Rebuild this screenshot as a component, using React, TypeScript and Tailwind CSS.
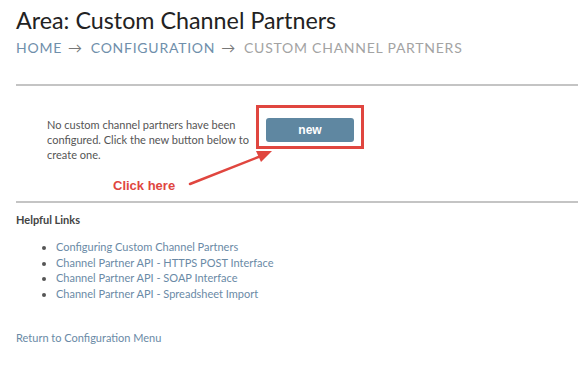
import React from 'react'

const links = [
  'Configuring Custom Channel Partners',
  'Channel Partner API - HTTPS POST Interface',
  'Channel Partner API - SOAP Interface',
  'Channel Partner API - Spreadsheet Import',
]

export default function App() {
  return (
    <div className="w-[578px] h-[377px] bg-white font-['Lato',sans-serif] text-[#444] pl-4 overflow-hidden">
      {/* Header */}
      <h1 className="text-[23.3px] leading-[26px] pt-[7px] text-[#222]">Area: Custom Channel Partners</h1>
      <div className="mt-[6px] text-[14px] leading-[18px] uppercase tracking-[0.75px] flex gap-[6px]">
        <span className="text-[#6f8fab]">Home</span>
        <span className="text-[#777]">→</span>
        <span className="text-[#6f8fab] ml-[2px]">Configuration</span>
        <span className="text-[#777]">→</span>
        <span className="text-[#a3a3a3] ml-[2px]">Custom Channel Partners</span>
      </div>

      <div className="mt-[27px] border-t-2 border-[#c4c4c4]" />

      {/* Empty state */}
      <div className="relative h-[115px]">
        <div className="flex pt-[19px]">
          <p className="ml-[31px] w-[205px] pt-[12px] text-[11px] leading-[15px] text-[#555]">
            No custom channel partners have been configured. Click the new button below to create one.
          </p>
          <div className="ml-[4px] h-[44px] border-[3px] border-[#e0463f] px-[7px] pt-[8px] pb-[6px]">
            <button className="w-[88px] h-[24px] rounded-[3px] bg-[#5f87a1] text-white text-[12px] font-bold font-['Liberation_Sans',sans-serif]">
              new
            </button>
          </div>
        </div>
        <span className="absolute left-[97px] top-[90px] text-[13px] font-bold text-[#e0463f] font-['Liberation_Sans',sans-serif]">
          Click here
        </span>
        <svg className="absolute left-[165px] top-[56px]" width="100" height="50" viewBox="0 0 100 50">
          <line x1="9" y1="42" x2="80" y2="14" stroke="#e0463f" strokeWidth="2.5" strokeLinecap="round" />
          <polygon points="91,9 75,9 80,20" fill="#e0463f" />
        </svg>
      </div>

      <div className="border-t-2 border-[#c4c4c4]" />

      {/* Helpful links */}
      <h2 className="mt-[9px] text-[11px] leading-[15px] font-bold text-[#444]">Helpful Links</h2>
      <ul className="mt-[12px] ml-[27px] list-disc text-[11px] leading-[15.5px] text-[#6a8aa6] marker:text-[#555]">
        {links.map(l => (
          <li key={l} className="ml-[13px]">{l}</li>
        ))}
      </ul>

      <a className="block mt-[29px] text-[11px] leading-[15px] text-[#6a8aa6]">Return to Configuration Menu</a>
    </div>
  )
}
